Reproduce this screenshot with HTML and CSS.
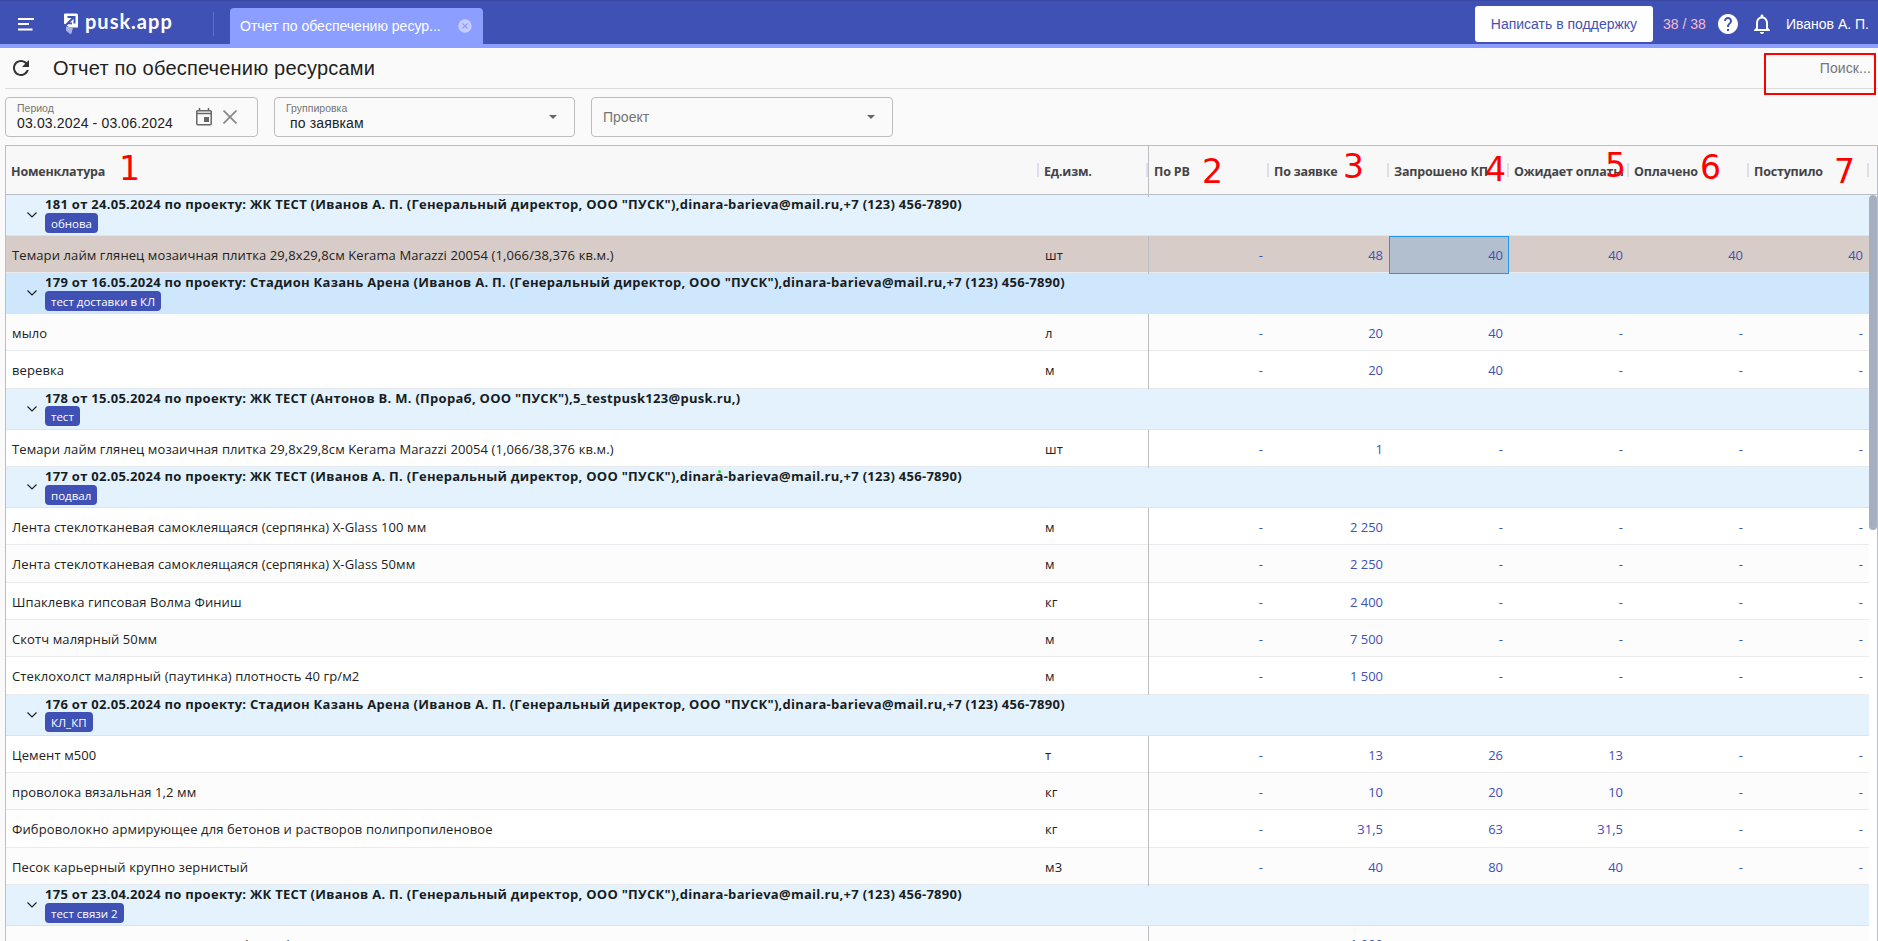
FILE: index.html
```
<!DOCTYPE html>
<html lang="ru">
    <head>
        <meta charset="utf-8">
        <title>Отчет по обеспечению ресурсами</title>
        <link rel="stylesheet" href="styles.css">
    </head>
    <body>
        <header class="topbar">
            <svg class="menu" width="18" height="14" viewBox="0 0 18 14"><path d="M1 2h16M1 7h11M1 12.500h14.500" stroke="#fff" stroke-width="2"/></svg>
            <svg class="logo" width="16" height="24" viewBox="0 0 16 24">
                <path d="M2 1.500h11.500a1.500 1.500 0 0 1 1.500 1.500V15.500H6.500L1 11.500V2.500a1 1 0 0 1 1-1z" fill="#fff"/>
                <path d="M2 14l3-3 4 .5M3.500 12.500L10 6M4.500 5h7v6.500" fill="none" stroke="#3f51b5" stroke-width="2"/>
                <path d="M3 14.500l7 1-1.500 6-1.500.5-4-3.500z" fill="#a9b1de"/>
            </svg>
            <span class="brand">pusk.app</span>
            <span class="divider"></span>
            <div class="tab">
                <span class="tab-title">Отчет по обеспечению ресур...</span>
                <svg width="14" height="14" viewBox="0 0 14 14"><circle cx="7" cy="7" r="6.700" fill="#c5cdff"/><path d="M4.500 4.500l5 5M9.500 4.500l-5 5" stroke="#8c9eff" stroke-width="1.300"/></svg>
            </div>
            <div class="topbar-right">
                <button class="support">Написать в поддержку</button>
                <span class="counter">38 / 38</span>
                <svg class="help" width="24" height="24" viewBox="0 0 24 24"><path fill="#fff" d="M12 2C6.480 2 2 6.480 2 12s4.480 10 10 10 10-4.480 10-10S17.520 2 12 2zm1 17h-2v-2h2v2zm2.070-7.750l-.9.920C13.450 12.900 13 13.500 13 15h-2v-.5c0-1.100.45-2.100 1.170-2.830l1.240-1.260c.37-.36.590-.86.590-1.410 0-1.100-.9-2-2-2s-2 .9-2 2H8c0-2.210 1.790-4 4-4s4 1.790 4 4c0 .88-.36 1.680-.93 2.250z"/></svg>
                <svg class="bell" width="24" height="24" viewBox="0 0 24 24"><path fill="#fff" d="M12 22c1.100 0 2-.9 2-2h-4c0 1.100.9 2 2 2zm6-6v-5c0-3.070-1.630-5.640-4.500-6.320V4c0-.83-.67-1.500-1.500-1.500s-1.500.67-1.500 1.500v.68C7.640 5.360 6 7.920 6 11v5l-2 2v1h16v-1l-2-2zm-2 1H8v-6c0-2.480 1.510-4.500 4-4.500s4 2.020 4 4.500v6z"/></svg>
                <span class="user">Иванов А. П.</span>
            </div>
        </header>

        <div class="heading">
            <svg width="24" height="24" viewBox="0 0 24 24"><path fill="#333" d="M17.650 6.350C16.200 4.900 14.210 4 12 4c-4.420 0-7.990 3.580-7.990 8s3.570 8 7.990 8c3.730 0 6.840-2.550 7.730-6h-2.080c-.82 2.330-3.040 4-5.650 4-3.310 0-6-2.690-6-6s2.690-6 6-6c1.660 0 3.140.69 4.220 1.780L13 11h7V4l-2.350 2.350z"/></svg>
            <h1>Отчет по обеспечению ресурсами</h1>
            <span class="search">Поиск...</span>
            <span class="search-mark"></span>
        </div>

        <div class="filters">
            <div class="field period">
                <div class="field-text">
                    <label>Период</label>
                    <span>03.03.2024 - 03.06.2024</span>
                </div>
                <svg class="calendar" width="16" height="18" viewBox="0 0 16 18"><path fill="none" stroke="#666" stroke-width="1.500" d="M1.500 2.750h13a.7.7 0 0 1 .7.700v12.300a1 1 0 0 1-1 1H1.800a1 1 0 0 1-1-1V3.500a.7.7 0 0 1 .7-.750zM.8 5.500h14.400M3.500 0v3M12.500 0v3"/><path fill="#666" d="M8 9h5v5H8z"/></svg>
                <svg width="14" height="14" viewBox="0 0 14 14"><path d="M.5.5l13 13M13.500.5l-13 13" stroke="#888" stroke-width="1.700"/></svg>
            </div>
            <div class="field group">
                <div class="field-text">
                    <label>Группировка</label>
                    <span class="indent">по заявкам</span>
                </div>
                <i class="arrow"></i>
            </div>
            <div class="field project">
                <span class="placeholder">Проект</span>
                <i class="arrow"></i>
            </div>
        </div>

        <div class="grid">
            <div class="grid-head">
                <div class="col">Номенклатура<b class="num n1">1</b></div>
                <div class="col">Ед.изм.</div>
                <div class="col first">По РВ<b class="num n2">2</b></div>
                <div class="col">По заявке<b class="num n3">3</b></div>
                <div class="col">Запрошено КП<b class="num n4">4</b></div>
                <div class="col">Ожидает оплаты<b class="num n5">5</b></div>
                <div class="col">Оплачено<b class="num n6">6</b></div>
                <div class="col">Поступило<b class="num n7">7</b></div>
            </div>
            <div class="grid-body" id="rows"></div>
            <div class="scrollbar"></div>
            <span class="dot"></span>
        </div>

        <script src="rows.js"></script>
    </body>
</html>
```
FILE: rows.js
```
var director = 'Иванов А. П. (Генеральный директор, ООО "ПУСК"),dinara-barieva@mail.ru,+7 (123) 456-7890';
var tile = 'Темари лайм глянец мозаичная плитка 29,8х29,8см Kerama Marazzi 20054 (1,066/38,376 кв.м.)';

var groups = [
    {
        title: '181 от 24.05.2024 по проекту: ЖК ТЕСТ (' + director + ')', tag: 'обнова',
        items: [[tile, 'шт', '-', '48', '40', '40', '40', '40']]
    },
    {
        title: '179 от 16.05.2024 по проекту: Стадион Казань Арена (' + director + ')', tag: 'тест доставки в КЛ',
        items: [
            ['мыло', 'л', '-', '20', '40', '-', '-', '-'],
            ['веревка', 'м', '-', '20', '40', '-', '-', '-']
        ]
    },
    {
        title: '178 от 15.05.2024 по проекту: ЖК ТЕСТ (Антонов В. М. (Прораб, ООО "ПУСК"),5_testpusk123@pusk.ru,)', tag: 'тест',
        items: [[tile, 'шт', '-', '1', '-', '-', '-', '-']]
    },
    {
        title: '177 от 02.05.2024 по проекту: ЖК ТЕСТ (' + director + ')', tag: 'подвал',
        items: [
            ['Лента стеклотканевая самоклеящаяся (серпянка) X-Glass 100 мм', 'м', '-', '2 250', '-', '-', '-', '-'],
            ['Лента стеклотканевая самоклеящаяся (серпянка) X-Glass 50мм', 'м', '-', '2 250', '-', '-', '-', '-'],
            ['Шпаклевка гипсовая Волма Финиш', 'кг', '-', '2 400', '-', '-', '-', '-'],
            ['Скотч малярный 50мм', 'м', '-', '7 500', '-', '-', '-', '-'],
            ['Стеклохолст малярный (паутинка) плотность 40 гр/м2', 'м', '-', '1 500', '-', '-', '-', '-']
        ]
    },
    {
        title: '176 от 02.05.2024 по проекту: Стадион Казань Арена (' + director + ')', tag: 'КЛ_КП',
        items: [
            ['Цемент м500', 'т', '-', '13', '26', '13', '-', '-'],
            ['проволока вязальная 1,2 мм', 'кг', '-', '10', '20', '10', '-', '-'],
            ['Фиброволокно армирующее для бетонов и растворов полипропиленовое', 'кг', '-', '31,5', '63', '31,5', '-', '-'],
            ['Песок карьерный крупно зернистый', 'м3', '-', '40', '80', '40', '-', '-']
        ]
    },
    {
        title: '175 от 23.04.2024 по проекту: ЖК ТЕСТ (' + director + ')', tag: 'тест связи 2',
        items: [['лента стеклотканевая интерьерная (рулон)', 'м', '-', '1 000', '-', '-', '-', '-']]
    }
];

var html = '';
var n = 0;

groups.forEach(function (group, g) {
    html += '<div class="group-row' + (g == 1 ? ' hover' : '') + '">' +
        '<svg class="chevron" width="10" height="6" viewBox="0 0 10 6"><path d="M.5.5L5 5 9.500.5" fill="none" stroke="#222" stroke-width="1.200"/></svg>' +
        '<div><div class="group-title">' + group.title + '</div><span class="tag">' + group.tag + '</span></div></div>';
    n++;

    group.items.forEach(function (item) {
        html += '<div class="row' + (n % 2 ? ' odd' : '') + (g == 0 ? ' selected' : '') + '">';
        item.forEach(function (text, i) {
            var cls = i < 2 ? 'cell' : 'cell value';
            if (i == 2) cls += ' first';
            if (g == 0 && i == 4) cls += ' focus';
            html += '<div class="' + cls + '">' + text + '</div>';
        });
        html += '</div>';
        n++;
    });
});

document.getElementById('rows').innerHTML = html;
```
FILE: styles.css
```
* {
    box-sizing: border-box;
}

body {
    margin: 0;
    height: 941px;
    overflow: hidden;
    display: flex;
    flex-direction: column;
    font-family: "Liberation Sans", Arial, sans-serif;
    color: #222;
    background-color: #fafafa;
}

/* Top bar */
.topbar {
    display: flex;
    flex-shrink: 0;
    height: 48px;
    padding-left: 17px;
    background-color: #3f51b5;
    border-top: 1px solid #3949a3;
    border-bottom: 4px solid #8c9eff;
    color: #fff;
}

.menu {
    margin-top: 16px;
}

.logo {
    margin: 11px 0 0 28px;
}

.brand {
    width: 87px;
    margin: 7px 0 0 6px;
    font: bold 20px/26px Lato, sans-serif;
    letter-spacing: 1px;
    white-space: nowrap;
}

.divider {
    width: 1px;
    height: 24px;
    margin: 11px 16px 0 41px;
    background-color: #6270b8;
}

.tab {
    display: flex;
    align-items: center;
    justify-content: space-between;
    width: 253px;
    margin-top: 7px;
    padding: 0 11px 0 10px;
    border-radius: 4px 4px 0 0;
    background-color: #8c9eff;
    font-size: 14px;
}

.tab-title {
    white-space: nowrap;
}

.topbar-right {
    display: flex;
    align-items: center;
    margin-left: auto;
    padding: 3px 9px 0 0;
    font-size: 14px;
}

.support {
    width: 178px;
    height: 36px;
    margin-right: 10px;
    padding: 0;
    border: none;
    border-radius: 3px;
    background-color: #fff;
    color: #3f51b5;
    font: 14px "Liberation Sans", Arial, sans-serif;
}

.counter {
    width: 43px;
    color: #f8bbd0;
    white-space: nowrap;
}

.help {
    margin-left: 10px;
}

.bell {
    margin: 0 12px 0 10px;
}

/* Heading */
.heading {
    position: relative;
    display: flex;
    flex-shrink: 0;
    align-items: center;
    height: 41px;
    margin-left: 5px;
    padding: 0 7px 0 4px;
    border-bottom: 1px solid #dcdcdc;
}

.heading h1 {
    margin: 0 0 0 20px;
    font-size: 20px;
    font-weight: normal;
    letter-spacing: 0.2px;
}

.search {
    margin-left: auto;
    font-size: 14px;
    letter-spacing: 0.1px;
    color: #757575;
}

.search-mark {
    position: absolute;
    top: 5px;
    right: 2px;
    width: 112px;
    height: 42px;
    border: 2px solid #f00;
}

/* Filters */
.filters {
    display: flex;
    flex-shrink: 0;
    gap: 16px;
    padding: 8px 5px;
}

.field {
    display: flex;
    align-items: center;
    height: 40px;
    padding: 0 17px 0 11px;
    border: 1px solid #bdbdbd;
    border-radius: 4px;
    font-size: 14px;
}

.period {
    width: 253px;
    padding-right: 20px;
}

.group {
    width: 301px;
    justify-content: space-between;
}

.project {
    width: 302px;
    justify-content: space-between;
}

.field-text {
    display: flex;
    flex-direction: column;
    line-height: 17px;
    letter-spacing: 0.15px;
}

.field-text label {
    font-size: 10.5px;
    line-height: 13px;
    letter-spacing: 0;
    color: #757575;
}

.indent {
    padding-left: 4px;
}

.calendar {
    margin: 0 11px 0 auto;
}

.placeholder {
    color: #757575;
}

.arrow {
    border: 4.500px solid transparent;
    border-top-color: #666;
    border-bottom: none;
}

/* Report table */
.grid {
    position: relative;
    flex: 1;
    min-height: 0;
    margin-left: 5px;
    border: 1px solid #babfc7;
    border-bottom: none;
    background-color: #fff;
    overflow: hidden;
    font: 13px "Open Sans", sans-serif;
}

.grid-head,
.row {
    display: grid;
    grid-template-columns: 1033px 109px 121px repeat(5, 120px);
}

.grid-head {
    height: 49px;
    background-color: #f8f8f8;
    border-bottom: 1px solid #babfc7;
    font: bold 12.5px/51px "Open Sans", sans-serif;
    letter-spacing: -0.18px;
    color: #444;
}

.col {
    position: relative;
    padding-left: 5px;
    white-space: nowrap;
}

/* Resize handle */
.col::after {
    content: "";
    position: absolute;
    top: 17px;
    right: 0;
    width: 2px;
    height: 14px;
    background-color: #dde0ea;
}

.first {
    border-left: 1px solid #babfc7;
}

.num {
    position: absolute;
    z-index: 1;
    color: #f00;
    font: 33px/34px "DejaVu Sans", sans-serif;
    letter-spacing: 0;
}

.n1 { left: 113px; top: 6px; }
.n2 { left: 53px; top: 9px; }
.n3 { left: 74px; top: 4px; }
.n4 { left: 96px; top: 7px; }
.n5 { left: 96px; top: 3px; }
.n6 { left: 71px; top: 5px; }
.n7 { left: 85px; top: 9px; }

.grid-body {
    width: 1863px;
}

.group-row {
    display: flex;
    height: 40.9px;
    padding-left: 21px;
    border-bottom: 1px solid #dde2eb;
    background-color: #e3f2fd;
}

.group-row.hover {
    background-color: #cfe7fc;
}

.chevron {
    margin: 17px 8px 0 0;
}

.group-title {
    height: 17.600px;
    font: bold 13px/18px "Open Sans", sans-serif;
    letter-spacing: 0.28px;
    color: #181d1f;
    white-space: nowrap;
}

.tag {
    display: block;
    width: fit-content;
    height: 20px;
    padding: 0 6px;
    border-radius: 4px;
    background-color: #3f51b5;
    color: #fff;
    font-size: 11.5px;
    line-height: 21px;
}

.row {
    height: 37.35px;
    border-bottom: 1px solid #e8eaed;
    background-color: #fff;
    line-height: 38px;
}

.row:last-child {
    line-height: 37px;
}

.row.odd {
    background-color: #fcfcfc;
}

.row.selected {
    background-color: #d7ccc8;
}

.cell {
    padding-left: 6px;
    letter-spacing: 0.1px;
    white-space: nowrap;
}

.value {
    padding-right: 6px;
    letter-spacing: 0;
    text-align: right;
    color: #3f51b5;
}

.focus {
    border: 1px solid #2196f3;
    background-color: #b2bfcf;
    padding-right: 5px;
    line-height: 36px;
}

.scrollbar {
    position: absolute;
    top: 49px;
    right: 0;
    width: 8px;
    height: 335px;
    border-radius: 4px;
    background-color: #a5afc0;
}

.dot {
    position: absolute;
    top: 324px;
    left: 712px;
    width: 3px;
    height: 3px;
    border-radius: 50%;
    background-color: #1fe01f;
}
```
